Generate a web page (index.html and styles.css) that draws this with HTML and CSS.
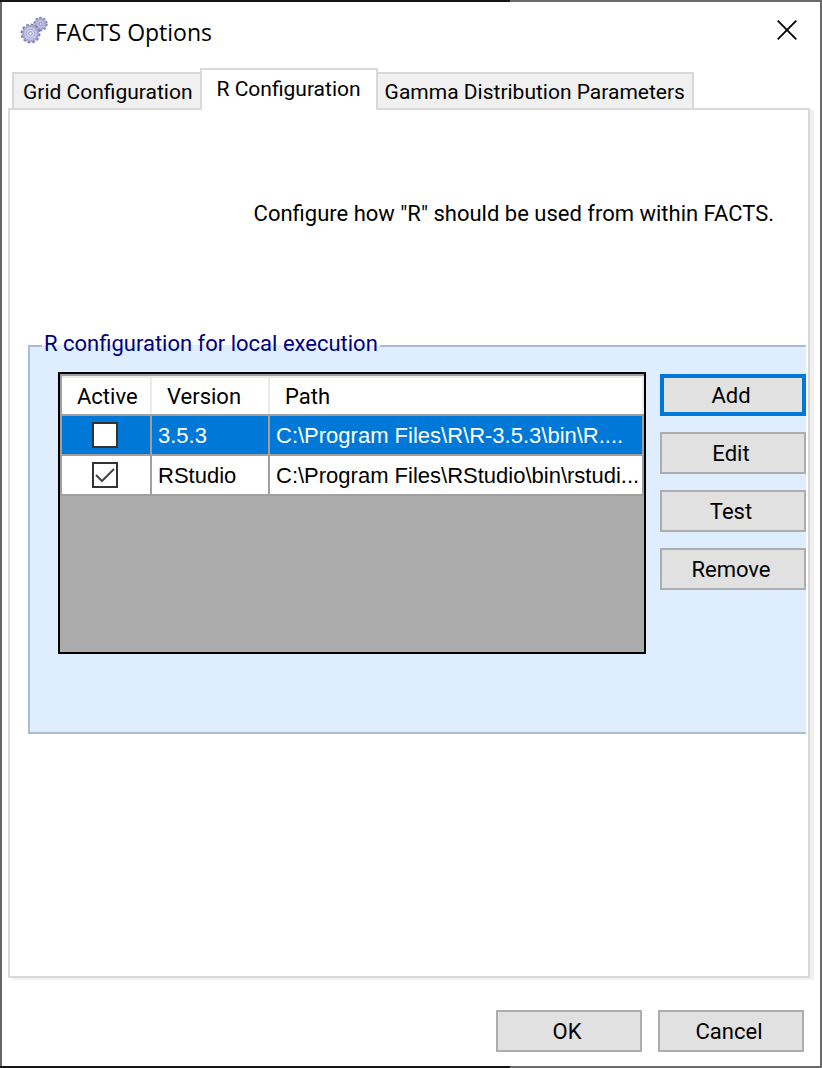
FILE: index.html
```html
<!DOCTYPE html>
<html lang="en">
<head>
<meta charset="utf-8">
<meta name="viewport" content="width=device-width, initial-scale=1">
<title>FACTS Options</title>
<link rel="stylesheet" href="styles.css">
</head>
<body>
<main class="dialog">
  <header class="titlebar">
    <svg class="app-icon" viewBox="0 0 30 30" aria-hidden="true">
      <g fill="#bcbce2" stroke="#8080ac">
        <circle cx="20.500" cy="9" r="6" stroke-width="2.400" stroke-dasharray="2.200 1.570"/>
        <circle cx="20.500" cy="9" r="5" stroke="#a6a6d2" stroke-width="2"/>
        <circle cx="20.500" cy="9" r="1.500" fill="#e4e4f6" stroke="#8f8fba"/>
        <circle cx="10.500" cy="18.500" r="8.700" stroke-width="2.600" stroke-dasharray="2.700 1.855"/>
        <circle cx="10.500" cy="18.500" r="7.400" fill="#c6c6e8" stroke="#a8a8d4" stroke-width="2"/>
        <circle cx="10.500" cy="18.500" r="4.200" fill="#d8d8f1" stroke="#adadd6"/>
        <circle cx="10.500" cy="18.500" r="1.800" fill="#f2f2fc" stroke="#8f8fba"/>
      </g>
    </svg>
    <h1 class="title">FACTS Options</h1>
    <button class="close" type="button" aria-label="Close">
      <svg class="close-icon" viewBox="0 0 20 20" aria-hidden="true"><path d="M.7.7 19.300 19.300M19.300.7.7 19.300" stroke="#000" stroke-width="1.800" fill="none"/></svg>
    </button>
  </header>

  <div class="tabs" role="tablist">
    <button class="tab" type="button" role="tab" aria-selected="false">Grid Configuration</button>
    <button class="tab tab-active" type="button" role="tab" aria-selected="true" id="tab-r" aria-controls="panel-r">R Configuration</button>
    <button class="tab" type="button" role="tab" aria-selected="false">Gamma Distribution Parameters</button>
  </div>

  <section class="panel" role="tabpanel" id="panel-r" aria-labelledby="tab-r">
    <p class="intro">Configure how "R" should be used from within FACTS.</p>
    <fieldset class="group">
      <legend class="legend">R configuration for local execution</legend>
      <div class="group-body">
        <div class="grid-box">
          <table class="grid">
            <colgroup><col class="col-active"><col class="col-version"><col></colgroup>
            <thead>
              <tr><th scope="col">Active</th><th scope="col">Version</th><th scope="col">Path</th></tr>
            </thead>
            <tbody>
              <tr class="selected">
                <td class="check-cell"><input class="check" type="checkbox" aria-label="3.5.3 active"></td>
                <td>3.5.3</td>
                <td>C:\Program Files\R\R-3.5.3\bin\R....</td>
              </tr>
              <tr>
                <td class="check-cell"><input class="check" type="checkbox" aria-label="RStudio active" checked></td>
                <td>RStudio</td>
                <td>C:\Program Files\RStudio\bin\rstudi...</td>
              </tr>
            </tbody>
          </table>
        </div>
        <div class="actions">
          <button class="btn btn-default" type="button">Add</button>
          <button class="btn" type="button">Edit</button>
          <button class="btn" type="button">Test</button>
          <button class="btn" type="button">Remove</button>
        </div>
      </div>
    </fieldset>
  </section>

  <footer class="footer">
    <button class="btn" type="button">OK</button>
    <button class="btn" type="button">Cancel</button>
  </footer>
</main>
</body>
</html>
```
FILE: styles.css
```css
* { box-sizing: border-box; }

body {
  margin: 0;
  min-height: 100vh;
  padding: 2px;
  display: flex;
  background: linear-gradient(90deg, #171415 62%, #6b6b6b 62%);
  font-family: Roboto, "Liberation Sans", sans-serif;
  font-size: 22px;
  line-height: 28px;
  color: #000;
}

button, input { font: inherit; color: inherit; margin: 0; }

.dialog {
  flex: 1;
  min-width: 0;
  display: flex;
  flex-direction: column;
  background: #fff;
  padding: 0 10px 14px 6px;
  box-shadow: -2px 0 #666, 2px 0 #6b6b6b;
}

.titlebar {
  display: flex;
  align-items: center;
  height: 60px;
  padding: 0 13px 4px 12px;
}
.app-icon { width: 30px; height: 30px; }
.title {
  flex: 1;
  margin: 4px 0 0 5px;
  font-family: "Open Sans", "Noto Sans", sans-serif;
  font-size: 23px;
  font-weight: 400;
}
.close { padding: 0; border: 0; background: none; display: flex; }
.close-icon { width: 20px; height: 20px; }

.tabs {
  display: flex;
  align-items: flex-end;
  height: 46px;
  padding-left: 4px;
}
.tab {
  height: 36px;
  padding: 2px 7px 0;
  border: 2px solid #d9d9d9;
  border-bottom: 0;
  background: #f0f0f0;
  font-size: 21px;
  white-space: nowrap;
}
.tab:first-child { padding-left: 9px; border-right: 0; }
.tab:last-child { border-left: 0; }
.tab-active {
  position: relative;
  height: 42px;
  margin-bottom: -2px;
  padding: 0 15px 2px;
  background: #fff;
}

.panel {
  flex: 1;
  border: 2px solid #d9d9d9;
  box-shadow: 4px 2px #f0f0f0;
  padding: 90px 2px 20px 18px;
}
.intro { margin: 0 32px 0 0; text-align: right; }

.group {
  min-width: 0;
  min-height: 404px;
  margin: 102px 0 0;
  padding: 0 0 76px 28px;
  border: 2px solid #a9bcd3;
  border-right: 0;
  background: #deeeff;
}
.legend { margin-left: -16px; padding: 0 2px 4px; color: #00007f; }
.group-body { display: flex; gap: 14px; padding-top: 10px; }

.grid-box {
  flex: 1;
  min-width: 0;
  min-height: 282px;
  border: 2px solid #000;
  background: #ababab;
}
.grid {
  width: 100%;
  table-layout: fixed;
  border-collapse: separate;
  border-spacing: 0;
  border: solid #a0a0a0;
  border-width: 0 0 0 2px;
}
.col-active { width: 90px; }
.col-version { width: 118px; }
.grid th {
  height: 42px;
  padding: 3px 0 0 15px;
  border: solid #a0a0a0;
  border-width: 2px 0;
  background: #fff;
  box-shadow: inset -2px 2px #ebebeb;
  text-align: left;
  font-weight: 400;
}
.grid td {
  height: 40px;
  padding: 2px 0 0 6px;
  border: solid #a0a0a0;
  border-width: 0 2px 2px 0;
  background: #fff;
  font-family: "Liberation Sans", Arial, sans-serif;
  overflow: hidden;
  white-space: nowrap;
  text-overflow: ellipsis;
}
.grid .selected td { background: #0078d7; color: #fff; }
.grid .check-cell { padding: 0 2px 0 0; text-align: center; }
.check {
  appearance: none;
  display: block;
  width: 26px;
  height: 26px;
  margin: 0 auto;
  border: 2px solid #333;
  background: #fff;
}
.check:checked {
  background: #fff url("data:image/svg+xml,%3Csvg xmlns='http://www.w3.org/2000/svg' viewBox='0 0 22 22'%3E%3Cpath d='M2 11l6 6L20 5' fill='none' stroke='%23444' stroke-width='2'/%3E%3C/svg%3E") center / 22px 22px no-repeat;
}

.actions { display: flex; flex-direction: column; gap: 16px; padding-top: 2px; }
.btn {
  width: 146px;
  height: 42px;
  padding: 2px 4px 0 0;
  border: 2px solid #adadad;
  background: #e1e1e1;
}
.btn-default { border: 4px solid #0078d7; }

.footer {
  display: flex;
  justify-content: flex-end;
  gap: 16px;
  padding: 32px 6px 0 0;
}
```
